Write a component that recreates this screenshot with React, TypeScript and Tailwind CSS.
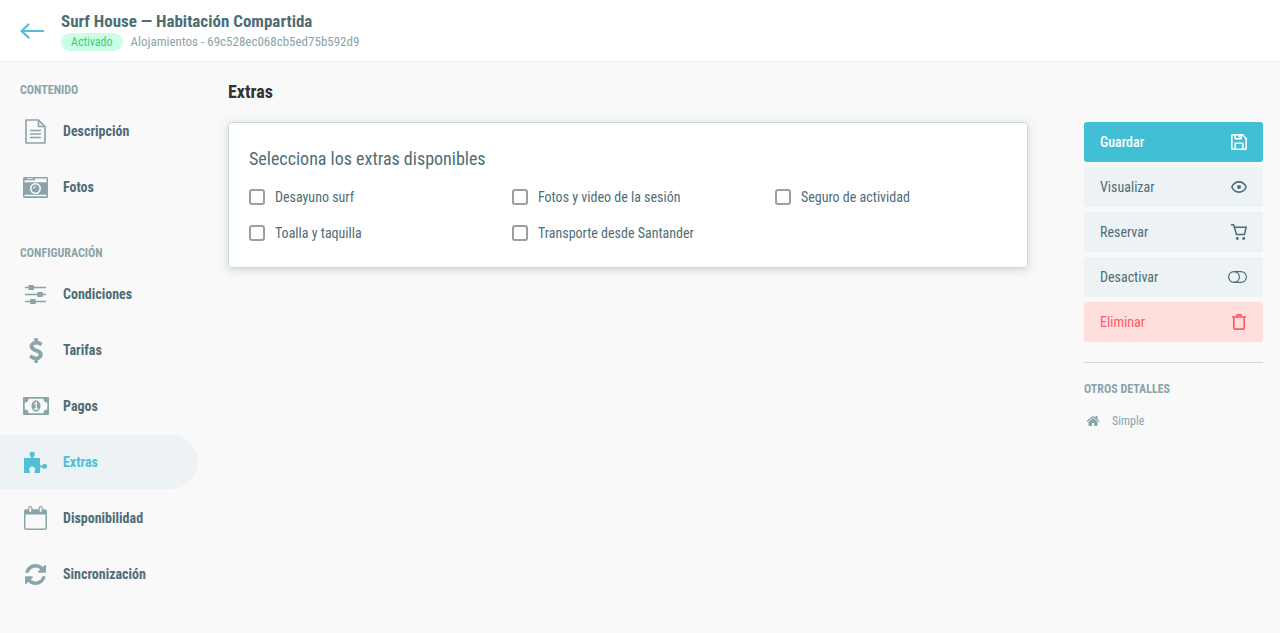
import { useState } from "react";
import type { ReactNode } from "react";

const icons = {
  back: (
    <svg width="24" height="16" viewBox="0 0 24 16" fill="none" stroke="currentColor" strokeWidth="2.2" strokeLinecap="round" strokeLinejoin="round">
      <path d="M23 8H1.5M8.500 1.500L1.500 8l7 6.500" />
    </svg>
  ),
  file: (
    <svg width="21" height="25" viewBox="0 0 21 25" fill="none" stroke="currentColor" strokeWidth="1.6" strokeLinejoin="round">
      <path d="M1 1h12.500L20 7.500V24H1zM13.500 1v6.500H20" />
      <path d="M5.700 11.500h9.600M5.700 15h9.600M5.700 18.500h9.600" strokeLinecap="round" />
    </svg>
  ),
  camera: (
    <svg width="25" height="21" viewBox="0 0 25 21">
      <path
        fill="currentColor"
        fillRule="evenodd"
        d="M1.500 0h22A1.500 1.500 0 0 1 25 1.500v18a1.500 1.500 0 0 1-1.500 1.500h-22A1.500 1.500 0 0 1 0 19.500v-18A1.500 1.500 0 0 1 1.500 0zM1.500 3.200v2h22V1.500H12v1.700zM4 1.200v.9h6v-.9zM1.500 17.800v1.400h22v-1.400z"
      />
      <circle cx="12.500" cy="11.500" r="5.500" fill="#f9f9f9" />
      <circle cx="12.500" cy="11.500" r="3.900" fill="currentColor" />
      <path d="M10.500 11.700a2.200 2.200 0 0 1 2.200-2.200" fill="none" stroke="#f9f9f9" strokeWidth="1" />
    </svg>
  ),
  sliders: (
    <svg width="21" height="19" viewBox="0 0 21 19" fill="currentColor">
      <path d="M0 1.800h21v1.500H0zM0 8.800h21v1.500H0zM0 15.800h21v1.500H0z" />
      <rect x="3.500" width="5.500" height="5" rx=".5" />
      <rect x="12.300" y="7" width="5.500" height="5" rx=".5" />
      <rect x="5.200" y="14" width="5.500" height="5" rx=".5" />
    </svg>
  ),
  dollar: (
    <svg width="14" height="25" viewBox="0 0 1024 1792" fill="currentColor" stroke="currentColor" strokeWidth="50">
      <path d="M978 1185q0 153-99.5 263.5t-258.5 136.5v175q0 14-9 23t-23 9h-135q-13 0-22.5-9.5t-9.5-22.5v-175q-66-9-127.5-31t-101.5-44.5-74-48-46.5-37.5-17.5-18q-17-21-2-41l103-135q7-10 23-12 15-2 24 9l2 2q113 99 243 125 37 8 74 8 81 0 142.5-43t61.5-122q0-28-15-53t-33.5-42-58.5-37.5-66-32-80-32.5q-39-16-61.5-25t-61.5-26.5-62.5-31-56.5-35.5-53.5-42.5-43.5-49-35.5-58-21-66.5-8.5-78q0-138 98-242t255-134v-180q0-13 9.5-22.5t22.5-9.5h135q14 0 23 9t9 23v176q57 6 110.5 23t87 33.5 63.5 37.5 39 29 15 14q17 18 5 38l-81 146q-8 15-23 16-14 3-27-7-3-3-14.5-12t-39-26.5-58.5-32-74.5-26-85.5-11.5q-95 0-155 43t-60 111q0 26 8.5 48t29.5 41.5 39.5 33 56 31 60.5 27 70 27.5q53 20 81 31.5t76 35 75.5 42.5 62 50 53 63.5 31.5 76.5 13 94z" />
    </svg>
  ),
  money: (
    <svg width="26" height="18" viewBox="0 0 26 18">
      <path
        fill="currentColor"
        fillRule="evenodd"
        d="M1 0h24a1 1 0 0 1 1 1v16a1 1 0 0 1-1 1H1a1 1 0 0 1-1-1V1a1 1 0 0 1 1-1zM5.500 1.700a3.800 3.800 0 0 1-3.800 3.800v7a3.800 3.800 0 0 1 3.800 3.800h15a3.800 3.800 0 0 1 3.800-3.800v-7a3.800 3.800 0 0 1-3.800-3.800z"
      />
      <ellipse cx="13" cy="9" rx="4.500" ry="5.700" fill="currentColor" />
      <path d="M11.300 7l1.900-1.200v6M11 12.200h4.300" fill="none" stroke="#f9f9f9" strokeWidth="1.300" />
    </svg>
  ),
  puzzle: (
    <svg width="23" height="21" viewBox="0 0 23 21" fill="currentColor">
      <path d="M0 6h6.300c.7-.3.900-.9.600-1.500a2.600 2.600 0 1 1 2.600 0c-.3.600-.1 1.200.6 1.500H16v6.500c.2.900.9 1.100 1.600.9l1.100-.5a2.400 2.400 0 1 1 0 2.800l-1.100-.4c-.7-.2-1.400 0-1.600.8V21h-5.600c-.2-.8 0-1.600.5-2.200a3 3 0 1 0-5.400 0c.5.600.7 1.400.5 2.200H0z" />
    </svg>
  ),
  calendar: (
    <svg width="23" height="24" viewBox="0 0 23 24">
      <rect x=".75" y="4" width="21.500" height="19.200" rx="1.500" fill="none" stroke="currentColor" strokeWidth="1.500" />
      <path d="M1 4h21v4.500H1z" fill="currentColor" />
      <rect x="4.700" y=".6" width="3.200" height="6" rx="1.600" fill="#f9f9f9" stroke="currentColor" strokeWidth="1.200" />
      <rect x="15.100" y=".6" width="3.200" height="6" rx="1.600" fill="#f9f9f9" stroke="currentColor" strokeWidth="1.200" />
    </svg>
  ),
  refresh: (
    <svg width="21" height="21" viewBox="0 0 1536 1536" fill="currentColor">
      <path d="M1511 928q0 5-1 7-64 268-268 434.5t-478 166.5q-146 0-282.5-55t-243.5-157l-129 129q-19 19-45 19t-45-19-19-45v-448q0-26 19-45t45-19h448q26 0 45 19t19 45-19 45l-137 137q71 66 161 102t187 36q134 0 250-65t186-179q11-17 53-117 8-23 30-23h192q13 0 22.5 9.5t9.5 22.5zm25-800v448q0 26-19 45t-45 19h-448q-26 0-45-19t-19-45 19-45l138-138q-148-137-349-137-134 0-250 65t-186 179q-11 17-53 117-8 23-30 23h-199q-13 0-22.5-9.5t-9.5-22.5v-7q65-268 270-434.5t480-166.5q146 0 284 55.5t245 156.5l130-129q19-19 45-19t45 19 19 45z" />
    </svg>
  ),
  save: (
    <svg width="16" height="16" viewBox="0 0 16 16" fill="none" stroke="currentColor" strokeWidth="1.6" strokeLinejoin="round">
      <path d="M.8 1.800a1 1 0 0 1 1-1h9.700l3.700 3.700v9.700a1 1 0 0 1-1 1H1.800a1 1 0 0 1-1-1z" />
      <path d="M4.200 1v3.700h6V1M8.300 1v2.500M4.200 15V9.200h7.600V15" />
    </svg>
  ),
  eye: (
    <svg width="16" height="12" viewBox="0 0 16 12">
      <path d="M.8 6C2.300 2.700 5 .9 8 .9s5.700 1.800 7.200 5.100C13.700 9.300 11 11.100 8 11.100S2.300 9.300.8 6z" fill="none" stroke="currentColor" strokeWidth="1.600" strokeLinejoin="round" />
      <circle cx="8" cy="6" r="2" fill="currentColor" />
    </svg>
  ),
  cart: (
    <svg width="16" height="16" viewBox="0 0 16 16">
      <path d="M0 .8h2.600l2.900 9.700h8l1.700-7.300H3.400" fill="none" stroke="currentColor" strokeWidth="1.500" />
      <circle cx="6.300" cy="14.500" r="1.400" fill="currentColor" />
      <circle cx="12.700" cy="14.500" r="1.400" fill="currentColor" />
    </svg>
  ),
  toggle: (
    <svg width="19" height="12" viewBox="0 0 19 12" fill="none" stroke="currentColor" strokeWidth="1.200">
      <rect x=".6" y=".6" width="17.800" height="10.800" rx="5.400" />
      <path d="M6 .6a5.400 5.400 0 0 1 0 10.800" />
    </svg>
  ),
  trash: (
    <svg width="16" height="16" viewBox="0 0 16 16" fill="none" stroke="currentColor" strokeWidth="1.700" strokeLinejoin="round">
      <path d="M1 3h14M2.800 3v10.700a1.500 1.500 0 0 0 1.500 1.500h7.400a1.500 1.500 0 0 0 1.500-1.500V3M5.800 3V1.700a.9.900 0 0 1 .9-.9h2.600a.9.900 0 0 1 .9.900V3" />
    </svg>
  ),
  home: (
    <svg width="14" height="14" viewBox="0 0 1792 1792" fill="currentColor">
      <path d="M1472 992v480q0 26-19 45t-45 19h-384v-384h-256v384h-384q-26 0-45-19t-19-45v-480q0-1 .5-3t.5-3l575-474 575 474q1 2 1 6zm223-69l-62 74q-8 9-21 11h-3q-13 0-21-7l-692-577-692 577q-12 8-24 7-13-2-21-11l-62-74q-8-10-7-23.5t11-21.5l719-599q32-26 76-26t76 26l244 204v-195q0-14 9-23t23-9h192q14 0 23 9t9 23v408l219 182q10 8 11 21.5t-7 23.5z" />
    </svg>
  ),
};

type IconName = keyof typeof icons;

const contentLinks: { label: string; icon: IconName }[] = [
  { label: "Descripción", icon: "file" },
  { label: "Fotos", icon: "camera" },
];

const configLinks: { label: string; icon: IconName }[] = [
  { label: "Condiciones", icon: "sliders" },
  { label: "Tarifas", icon: "dollar" },
  { label: "Pagos", icon: "money" },
  { label: "Extras", icon: "puzzle" },
  { label: "Disponibilidad", icon: "calendar" },
  { label: "Sincronización", icon: "refresh" },
];

const extras = [
  { id: "desayuno", label: "Desayuno surf" },
  { id: "fotos", label: "Fotos y video de la sesión" },
  { id: "seguro", label: "Seguro de actividad" },
  { id: "toalla", label: "Toalla y taquilla" },
  { id: "transporte", label: "Transporte desde Santander" },
];

function SectionTitle({ children }: { children: ReactNode }) {
  return <h2 className="text-xs leading-4 font-bold uppercase text-[#8aa4aa]">{children}</h2>;
}

function NavSection({ title, links }: { title: string; links: { label: string; icon: IconName }[] }) {
  return (
    <section>
      <div className="pl-5 mb-[6px]">
        <SectionTitle>{title}</SectionTitle>
      </div>
      <ul className="flex flex-col gap-[2px]">
        {links.map((link) => {
          const active = link.label === "Extras";
          return (
            <li key={link.label}>
              <a
                href="#"
                aria-current={active ? "page" : undefined}
                className={
                  active
                    ? "flex items-center gap-3 h-[54px] pl-5 rounded-r-full bg-[#edf2f5] text-[#4fc0d5]"
                    : "flex items-center gap-3 h-[54px] pl-5 rounded-r-full text-[#4f6d76] hover:bg-[#edf2f5]"
                }
              >
                <span className={active ? "w-[31px] flex justify-center" : "w-[31px] flex justify-center text-[#8aa4aa]"}>
                  {icons[link.icon]}
                </span>
                <span className="text-sm font-bold">{link.label}</span>
              </a>
            </li>
          );
        })}
      </ul>
    </section>
  );
}

function ActionButton({ label, icon, className, onClick }: { label: string; icon: IconName; className: string; onClick?: () => void }) {
  return (
    <button
      type="button"
      onClick={onClick}
      className={`flex items-center justify-between h-10 px-4 rounded-[3px] text-sm cursor-pointer ${className}`}
    >
      {label}
      {icons[icon]}
    </button>
  );
}

export default function App() {
  const [selected, setSelected] = useState<string[]>([]);

  function toggleExtra(id: string) {
    setSelected(selected.includes(id) ? selected.filter((s) => s !== id) : [...selected, id]);
  }

  return (
    <div className="min-h-screen bg-[#f9f9f9] text-[#4f6d76] font-['Roboto_Condensed','Liberation_Sans_Narrow',Roboto,sans-serif]">
      <header className="flex items-center gap-[17px] px-5 h-[62px] bg-white border-b border-[#eeeeee]">
        <a href="#" aria-label="Volver" className="text-[#4fc0d5]">
          {icons.back}
        </a>
        <div>
          <h1 className="text-[17px] leading-[23px] font-bold">Surf House — Habitación Compartida</h1>
          <div className="flex items-center gap-2 leading-[18px]">
            <span className="px-[10px] rounded-full bg-[#cdfee5] text-xs leading-[18px] text-[#2bd47d]">Activado</span>
            <span className="text-[13px] leading-[18px] text-[#8aa4aa]">Alojamientos - 69c528ec068cb5ed75b592d9</span>
          </div>
        </div>
      </header>

      <div className="flex pr-[17px]">
        <nav className="w-[198px] shrink-0 pt-5 pb-6 flex flex-col gap-[31px]">
          <NavSection title="Contenido" links={contentLinks} />
          <NavSection title="Configuración" links={configLinks} />
        </nav>

        <main className="flex-1 ml-[30px] mr-14 pt-4">
          <h2 className="mb-4 text-lg leading-7 font-bold text-[#333333]">Extras</h2>
          <fieldset className="px-5 py-6 bg-white border border-[#cbd8e2] rounded-[4px] shadow-[0_2px_10px_rgba(79,109,118,0.25)]">
            <legend className="float-left w-full mb-4 text-lg leading-6">Selecciona los extras disponibles</legend>
            <div className="clear-both grid grid-cols-3 gap-x-[31px] gap-y-4">
              {extras.map((extra) => (
                <label key={extra.id} className="flex items-center gap-[10px] text-sm leading-5 cursor-pointer">
                  <input
                    type="checkbox"
                    checked={selected.includes(extra.id)}
                    onChange={() => toggleExtra(extra.id)}
                    className="appearance-none w-4 h-4 shrink-0 border-2 border-[#9e9e9e] rounded-[3px] checked:bg-[#41bfd5] checked:border-[#41bfd5]"
                  />
                  {extra.label}
                </label>
              ))}
            </div>
          </fieldset>
        </main>

        <aside className="w-[179px] shrink-0 pt-[60px]">
          <div className="flex flex-col gap-[5px] pb-5 border-b border-[#cbd8e2]">
            <ActionButton label="Guardar" icon="save" className="bg-[#41bfd5] text-white font-medium" />
            <ActionButton label="Visualizar" icon="eye" className="bg-[#edf2f5]" />
            <ActionButton label="Reservar" icon="cart" className="bg-[#edf2f5]" />
            <ActionButton label="Desactivar" icon="toggle" className="bg-[#edf2f5]" />
            <ActionButton label="Eliminar" icon="trash" className="bg-[#ffdede] text-[#ff5a5f]" />
          </div>
          <div className="pt-[18px]">
            <SectionTitle>Otros detalles</SectionTitle>
            <p className="flex items-center gap-3 mt-4 pl-[2px] text-xs leading-4 text-[#8aa4aa]">
              {icons.home}
              Simple
            </p>
          </div>
        </aside>
      </div>
    </div>
  );
}
